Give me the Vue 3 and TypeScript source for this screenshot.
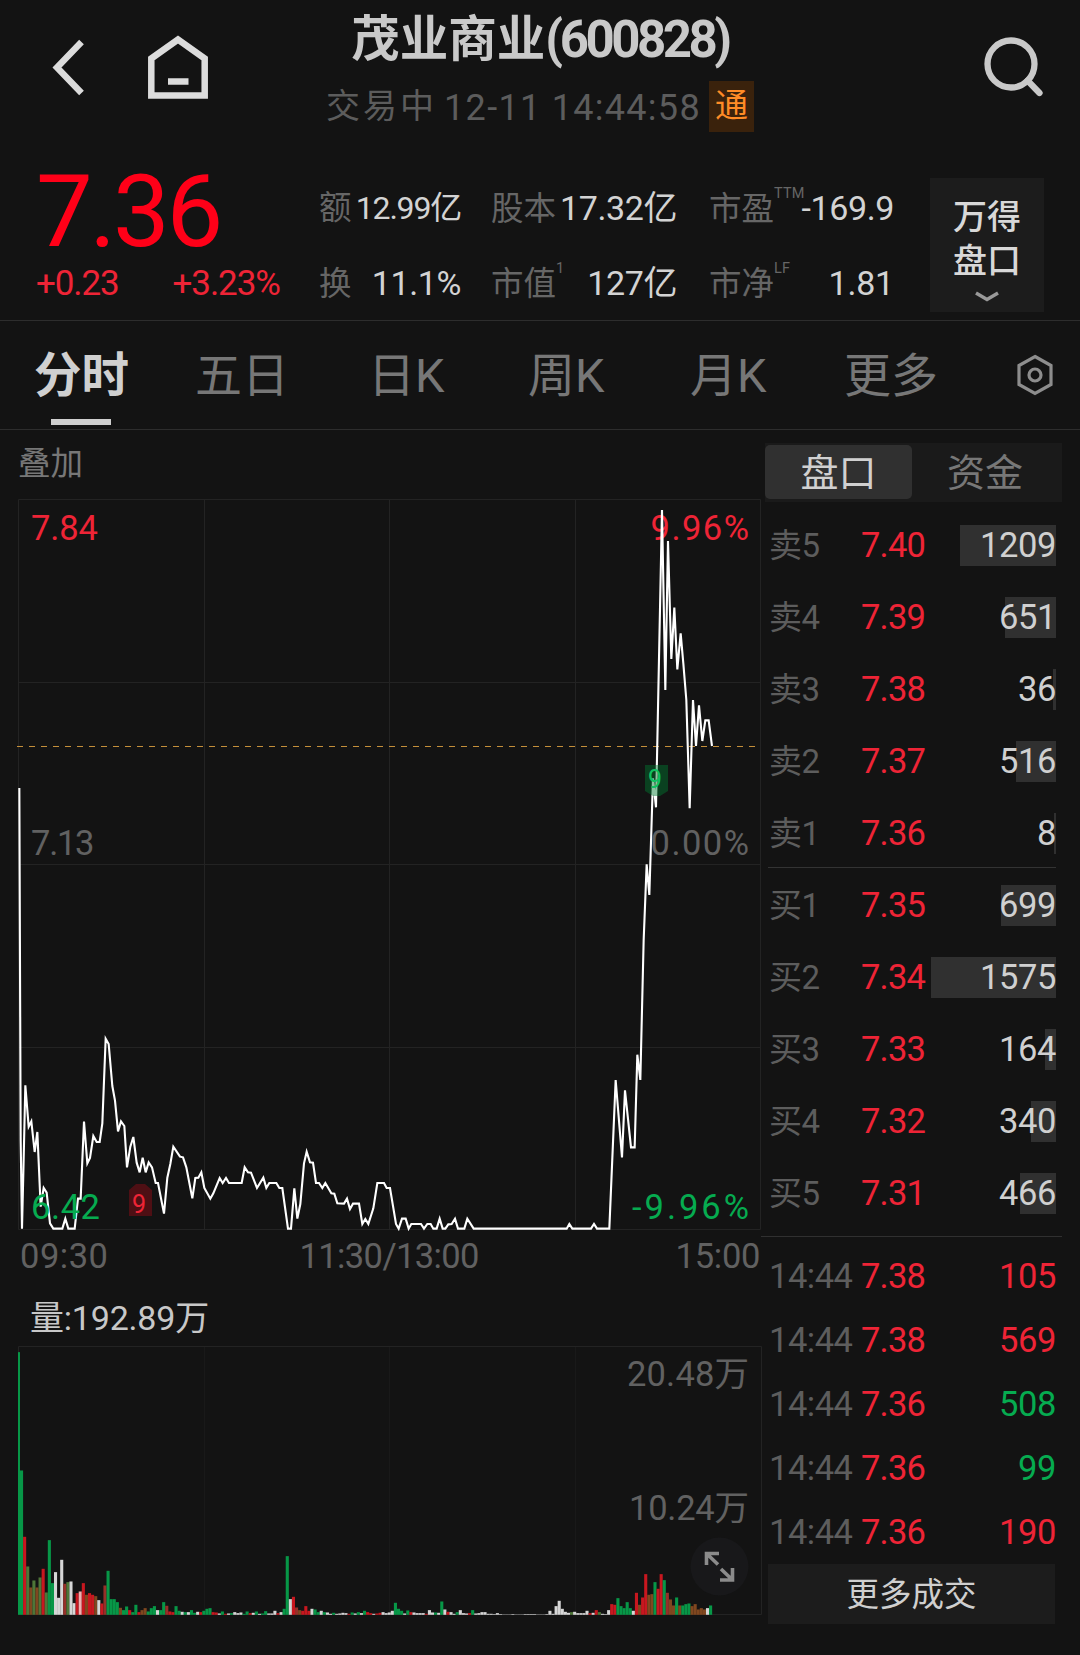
<script setup lang="ts">
interface Level { label: string; price: string; volume: string; bar: number }
interface Trade { time: string; price: string; volume: string; up: boolean }

const tabs = ['分时', '五日', '日K', '周K', '月K', '更多']

const asks: Level[] = [
  { label: '卖5', price: '7.40', volume: '1209', bar: 96 },
  { label: '卖4', price: '7.39', volume: '651', bar: 51 },
  { label: '卖3', price: '7.38', volume: '36', bar: 3 },
  { label: '卖2', price: '7.37', volume: '516', bar: 40 },
  { label: '卖1', price: '7.36', volume: '8', bar: 2 },
]
const bids: Level[] = [
  { label: '买1', price: '7.35', volume: '699', bar: 55 },
  { label: '买2', price: '7.34', volume: '1575', bar: 125 },
  { label: '买3', price: '7.33', volume: '164', bar: 11 },
  { label: '买4', price: '7.32', volume: '340', bar: 25 },
  { label: '买5', price: '7.31', volume: '466', bar: 36 },
]
const trades: Trade[] = [
  { time: '14:44', price: '7.38', volume: '105', up: true },
  { time: '14:44', price: '7.38', volume: '569', up: true },
  { time: '14:44', price: '7.36', volume: '508', up: false },
  { time: '14:44', price: '7.36', volume: '99', up: false },
  { time: '14:44', price: '7.36', volume: '190', up: true },
]

// Minute line, in thirds of a pixel
const priceLine =
  '58,-636 62,420 66,686 70,520 76,256 86,380 94,364 104,456 112,396 122,620 131,564 140,578 150,670 160,686 187,686 196,656 205,686 224,686 234,596 242,596 252,365 262,490 270,474 280,408 290,426 299,426 307,370 317,116 326,132 337,258 345,302 354,394 363,364 373,378 381,502 391,440 400,411 410,488 419,517 428,473 437,517 446,487 456,502 467,549 474,549 492,641 502,533 511,492 520,440 540,470 549,472 559,502 577,595 586,534 595,533 604,517 613,564 631,596 640,580 659,534 668,549 678,534 687,549 725,549 734,502 744,517 753,518 771,564 790,533 799,564 808,549 829,549 838,564 847,564 864,686 873,686 883,565 892,656 901,612 912,490 920,455 930,487 939,488 948,549 957,549 967,564 976,549 994,580 1003,581 1012,610 1032,611 1041,596 1050,627 1059,611 1077,611 1087,672 1096,657 1105,672 1120,625 1132,549 1152,549 1160,564 1170,564 1188,672 1196,686 1206,656 1217,656 1226,686 1234,672 1263,672 1272,686 1282,672 1292,672 1300,686 1310,686 1319,656 1328,686 1336,686 1345,673 1355,672 1365,656 1374,686 1393,686 1402,656 1421,686 1700,686 1708,672 1717,686 1773,686 1782,672 1791,686 1828,686 1847,240 1866,472 1875,271 1893,442 1904,442 1912,164 1921,240 1931,-180 1940,-407 1948,-315 1959,-665 1968,-578 1986,-1470 1996,-930 2004,-1377 2014,-1023 2023,-1177 2032,-992 2042,-1100 2050,-1010 2059,-900 2069,-575 2079,-900 2088,-762 2097,-884 2107,-777 2116,-839 2126,-839 2136,-762'

// Volume per minute, grouped by starting minute.
// One token per minute: colour key followed by the bar height in thirds of a pixel.
const volumeSeries: [number, string][] = [
  [0, 'g788 g433 r234 o145 m82 o103 m82 o112 r138 o67 g224 g95 w128 w51 w165 n93 o98 w100 w35 r65 p70 r95 m60 r65 r60 m56 w44 r34 n88 g132 g47 g47 g38 m21 g14 g25 r14 g8 g30 r8 m14 m20 g10 g20 g26 w14 g14 g38 n27 r10 r8 g26 g12 w9 g8 w8 g14 g6 w9 r8 g12 g18 g20 r8 r7 w4 g10 r3 w4 g5 w8 w5 w7 g3 g10 r5 w6 g10 w3 g4 g11 w4 w4 w12 r5 w8 g18'],
  [87, 'g176 w47 r54 n22 m14 r12 r26 r12 w18 g16 g8 w12 g8 w7 w3 g6 w3 w4 w6 w5 r3 g7 w4 g8 w5 g12 r8 r5 w3 r4 r6 w8 w5 w7 w12'],
  [122, 'g36 g18 g12 w4 g13 r8 w7 w5 w5 w5 r3 w14 w7 g7 w6'],
  [137, 'g40 w16 r9 w8 w3 g8 w14 w5 w4 r5 g14 w4 w5 w8 w8 w3 w3 w2 w5 w2 w1 w1 w1 w2 w1 w1 w1 w2 w2 w2 w2 w1 w1 w1 w2'],
  [172, 'w12 w3 w26 w42 w18 w9 w6 o8 w9 w5 w5 w5 w12 r5 w6 r14 o8 w3 w2'],
  [191, 'w14 r32 r30 g50 g26 g20 g38 g20 w12 r66 m30 r52 r122 m60 m62 g98 r78 r122 g104 n66 m46 m28 g52 m28 g28 g32 g34 m26 m32 m16 m20 m16 w20 g28'],
]
const barColors: Record<string, string> = {
  g: '#079747', r: '#c8171f', w: '#d6d6d6', m: '#80471f', o: '#4e7638', n: '#963029', p: '#efb0b0',
}
const volumeBars = volumeSeries.flatMap(([from, tokens]) =>
  tokens.split(' ').map((token, n) => {
    const i = from + n
    const end = 60 + i * 9.27
    const start = i === 0 ? 54 : end - 9.27
    const h = Number(token.slice(1)) / 3
    return { x: start / 3, w: (end - start) / 3, y: 1614.8 - h, h, fill: barColors[token[0]] }
  }),
)
</script>

<template>
  <main class="app">
    <header class="top">
      <div class="nav">
        <svg class="back" width="40" height="60" viewBox="0 0 40 60"><path d="M33.500 6 9 31.500 33.500 57" /></svg>
        <svg class="home" width="68" height="72" viewBox="0 0 68 72">
          <path d="M7.300 28.500 34 9.500 60.700 28.500V65.500H7.300Z" /><path d="M24 51.500H44.500" />
        </svg>
      </div>
      <div class="heading">
        <h1><span>茂业商业</span><span class="code">(600828)</span></h1>
        <div class="status">
          <span class="state">交易中</span><span class="clock">12-11 14:44:58</span><span class="tag">通</span>
        </div>
      </div>
      <svg class="search" width="66" height="70" viewBox="0 0 66 70"><circle cx="31" cy="32" r="23.500" /><path d="M47.500 48.500 59.500 61" /></svg>
    </header>

    <section class="quote">
      <div class="last">
        <div class="price">7.36</div>
        <div class="change"><span>+0.23</span><span class="pct">+3.23%</span></div>
      </div>
      <dl class="stats">
        <div class="s1"><dt>额</dt><dd class="small">12.99亿</dd></div>
        <div class="s2"><dt>股本</dt><dd>17.32亿</dd></div>
        <div class="s3"><dt>市盈<sup>TTM</sup></dt><dd>-169.9</dd></div>
        <div class="s1"><dt>换</dt><dd>11.1%</dd></div>
        <div class="s2"><dt>市值<sup>1</sup></dt><dd>127亿</dd></div>
        <div class="s3"><dt>市净<sup>LF</sup></dt><dd class="pb">1.81</dd></div>
      </dl>
      <button class="wind">
        <span>万得</span><span>盘口</span>
        <svg width="28" height="14" viewBox="0 0 28 14"><path d="M3 3 14 9.500 25 3" /></svg>
      </button>
    </section>

    <nav class="tabs">
      <span v-for="(t, i) in tabs" :key="t" :class="['tab', 't' + i, { active: i === 0 }]">{{ t }}</span>
      <svg class="gear" width="40" height="44" viewBox="0 0 40 44">
        <path d="M20 3.500 36 12.500V31.500L20 40.500 4 31.500V12.500Z" /><circle cx="20" cy="22" r="6" />
      </svg>
    </nav>

    <div class="body">
      <section class="charts">
        <div class="overlay">叠加</div>
        <svg class="chart" width="764" height="781" viewBox="0 495 764 781">
          <g class="grid">
            <path d="M18.500 499.500H760.500V1229.500H18.500ZM204.500 499V1229M389.500 499V1229M575.500 499V1229M18 682.500H760M18 864.500H760M18 1047.500H760" />
          </g>
          <text class="red" x="31" y="540" textLength="67">7.84</text>
          <text class="red" x="650.500" y="540" textLength="98.500">9.96%</text>
          <text class="dim" x="31" y="854.500" textLength="63.500">7.13</text>
          <text class="dim" x="650.500" y="854.500" textLength="98.500">0.00%</text>
          <path class="dash" d="M17 746.500H757" />
          <polyline class="line" :points="priceLine" transform="translate(0 1000) scale(.33333)" />
          <text class="green" x="31" y="1218.500" textLength="69">6.42</text>
          <text class="green" x="632" y="1218.500" textLength="117">-9.96%</text>
          <path d="M129 1190 136 1184H145L152 1190V1216H129Z" fill="#b00a18" fill-opacity=".38" />
          <text class="mark" x="132" y="1213" fill="#ee2436">9</text>
          <path d="M645 765H668V791L660 796H653L645 791Z" fill="#007a30" fill-opacity=".45" />
          <text class="mark" x="648" y="788" fill="#10c060">9</text>
          <text class="dim" x="20" y="1268" textLength="88">09:30</text>
          <text class="dim" x="299.500" y="1268" textLength="180">11:30/13:00</text>
          <text class="dim" x="675.500" y="1268" textLength="85">15:00</text>
        </svg>
        <div class="volume-title">量:192.89万</div>
        <svg class="chart" width="764" height="280" viewBox="0 1340 764 280">
          <g class="grid"><path d="M18.500 1614.500V1346.500H761.500V1614.500Z" /></g>
          <path class="faint" d="M204.500 1347V1614M389.500 1347V1614M575.500 1347V1614" />
          <rect v-for="(b, i) in volumeBars" :key="i" :x="b.x" :y="b.y" :width="b.w" :height="b.h" :fill="b.fill" />
          <text class="dim" x="627" y="1385.500" textLength="122">20.48万</text>
          <text class="dim" x="629" y="1519.500" textLength="120">10.24万</text>
          <circle cx="719.500" cy="1566.500" r="29" fill="#18181a" />
          <path class="expand" d="M718 1564.500 706.500 1553.500M706.500 1565V1553.500H719M721 1569 732.500 1580M732.500 1568V1580H720" />
        </svg>
      </section>

      <aside class="book">
        <div class="segment"><span class="on">盘口</span><span>资金</span></div>
        <div class="levels asks">
          <div v-for="l in asks" :key="l.label" class="level">
            <span class="label">{{ l.label }}</span><span class="px">{{ l.price }}</span>
            <span class="vol"><i :style="{ width: l.bar + 'px' }"></i><b>{{ l.volume }}</b></span>
          </div>
        </div>
        <div class="levels bids">
          <div v-for="l in bids" :key="l.label" class="level">
            <span class="label">{{ l.label }}</span><span class="px">{{ l.price }}</span>
            <span class="vol"><i :style="{ width: l.bar + 'px' }"></i><b>{{ l.volume }}</b></span>
          </div>
        </div>
        <div class="trades">
          <div v-for="(t, i) in trades" :key="i" class="trade">
            <span class="label">{{ t.time }}</span><span class="px">{{ t.price }}</span>
            <span :class="['vol', t.up ? 'up' : 'down']"><b>{{ t.volume }}</b></span>
          </div>
        </div>
        <button class="more">更多成交</button>
      </aside>
    </div>
  </main>
</template>

<style>
body { margin: 0; background: #131313; }
</style>

<style scoped>
* { box-sizing: border-box; }
.app {
  width: 1080px; height: 1655px; overflow: hidden; background: #131313; color: #cfcfcf;
  font-family: Roboto, "Noto Sans CJK SC", sans-serif; display: flex; flex-direction: column;
}
svg { display: block; fill: none; }
button { border: 0; padding: 0; color: inherit; font: inherit; }

.top { height: 166px; display: flex; flex: none; }
.nav { display: flex; width: 300px; flex: none; padding: 36px 0 0 48px; }
.back path { stroke: #dcdcdc; stroke-width: 6.5; }
.home { margin: -6px 0 0 56px; }
.home path { stroke: #dcdcdc; stroke-width: 6.5; }
.heading { width: 480px; display: flex; flex-direction: column; align-items: center; padding-top: 8px; }
h1 { margin: 0; height: 64px; line-height: 64px; font-size: 48.500px; font-weight: 700; display: flex; color: #c9c9c9; white-space: nowrap; }
.code { font-size: 51px; letter-spacing: -3.500px; }
.status { display: flex; align-items: center; height: 51px; margin-top: 9px; color: #5c5c5c; font-size: 36px; line-height: 53px; white-space: nowrap; }
.state { font-size: 34px; letter-spacing: 3px; }
.clock { margin-left: 7px; letter-spacing: 1.300px; padding-top: 3px; }
.tag { width: 45px; height: 51px; line-height: 50px; margin-left: 8px; background: #3a220c; color: #ff8c26; font-size: 33px; text-align: center; }
.search { margin: 32px 34px 0 auto; }
.search circle, .search path { stroke: #c9c9c9; stroke-width: 6.300; stroke-linecap: round; }

.quote { height: 155px; flex: none; display: flex; border-bottom: 1px solid #2d2d2d; }
.last { width: 320px; padding-left: 36px; color: #ff0018; }
.price { height: 91px; line-height: 92px; font-size: 101px; letter-spacing: -3.200px; }
.change { display: flex; margin-top: 7px; line-height: 40px; font-size: 35px; color: #ee2436; letter-spacing: -1.100px; }
.pct { margin-left: 54px; }
.stats { width: 574px; margin: 10px 0 0; display: grid; grid-template-columns: 141px 31px 185px 33px 184px; grid-auto-rows: 75px; font-size: 34px; }
.stats div { display: flex; justify-content: space-between; align-items: baseline; height: 64px; line-height: 64px; white-space: nowrap; }
.s1 { grid-column: 1; }
.s2 { grid-column: 3; }
.s3 { grid-column: 5; }
.stats dt { color: #666; font-size: 32.500px; position: relative; left: -1px; }
.stats dd { margin: 0; color: #d3d3d3; letter-spacing: -.4px; }
.stats .small { font-size: 32px; letter-spacing: -1.200px; }
.stats .pb { letter-spacing: -.2px; }
sup { position: absolute; left: 100%; top: 1px; font-size: 14.500px; line-height: 32px; letter-spacing: .1px; }
.wind { width: 114px; height: 134px; margin: 12px 0 0 36px; background: #1c1c1c; display: flex; flex-direction: column; align-items: center; font-size: 34px; line-height: 44px; color: #d8d8d8; padding-top: 17px; font-weight: 500; }
.wind svg { margin-top: 7px; }
.wind path { stroke: #999; stroke-width: 3.500; }

.tabs { height: 109px; flex: none; display: flex; border-bottom: 1px solid #2d2d2d; font-size: 47px; color: #777; padding-left: 34px; }
.tab { line-height: 110px; height: 108px; white-space: nowrap; position: relative; }
.t0 { width: 161px; }
.t1 { width: 173px; }
.t2 { width: 160px; }
.t3 { width: 162px; }
.t4 { width: 154px; }
.t5 { width: 170px; }
.active { color: #d0d0d0; font-weight: 700; font-size: 47.500px; }
.active::after { content: ''; position: absolute; left: 17px; bottom: 4px; width: 60px; height: 6px; background: #cfcfcf; }
.gear { margin: 32px 0 0 1px; }
.gear path, .gear circle { stroke: #8d8d8d; stroke-width: 3.200; }

.body { display: flex; flex: 1; }
.charts { width: 765px; }
.overlay { height: 65px; padding: 14px 0 0 18px; line-height: 40px; font-size: 32.500px; color: #777; }
.chart text { font-size: 34.500px; }
.chart .mark { font-size: 25px; }
.grid path { stroke: #232323; }
.faint { stroke: #191919; }
.line { stroke: #fff; stroke-width: 6.300; }
.dash { stroke: #c48f3a; stroke-width: 1.200; stroke-dasharray: 6 6; }
.chart .red { fill: #ee2436; }
.chart .green { fill: #06ab50; }
.chart .dim { fill: #616161; }
.volume-title { height: 64px; padding: 20px 0 0 30px; line-height: 44px; font-size: 34px; letter-spacing: -.2px; color: #c8c8c8; white-space: nowrap; }
.expand { stroke: #8b8b8b; stroke-width: 3.600; }

.book { width: 297px; margin-top: 13px; }
.segment { display: flex; height: 59px; padding-top: 2px; background: #1a1a1a; font-size: 38px; line-height: 57px; color: #777; }
.segment span { width: 146px; text-align: center; }
.segment .on { width: 147px; height: 54px; border-radius: 5px; background: #303030; color: #d0d0d0; }
.levels { margin: 0 6px 0 3px; }
.asks { height: 366px; padding-top: 7px; border-bottom: 1px solid #333; }
.bids { height: 368px; padding-top: 1px; }
.level { display: flex; height: 72px; align-items: center; font-size: 34.500px; }
.label { width: 93px; padding-left: 1px; color: #5d5d5d; font-size: 33px; white-space: nowrap; }
.level .label { padding-bottom: 5px; letter-spacing: -.5px; }
.px { width: 72px; color: #ee2436; letter-spacing: -.8px; }
.vol { flex: 1; height: 41px; position: relative; line-height: 41px; text-align: right; color: #d0d0d0; }
.vol i { position: absolute; right: 0; top: 0; height: 41px; background: #303030; }
.vol b { position: relative; font-weight: 400; letter-spacing: -.4px; }
.trades { border-top: 1px solid #303030; margin-left: -4px; padding: 7px 6px 0 7px; height: 328px; }
.trade { display: flex; height: 64px; align-items: center; font-size: 34.500px; }
.trade .label { font-size: 34.500px; letter-spacing: -.5px; }
.up { color: #ee2436; }
.down { color: #06ab50; }
.more { display: block; width: 287px; height: 60px; margin-left: 3px; padding-bottom: 5px; background: #1c1c1c; font-size: 32.500px; color: #cfcfcf; }
</style>
